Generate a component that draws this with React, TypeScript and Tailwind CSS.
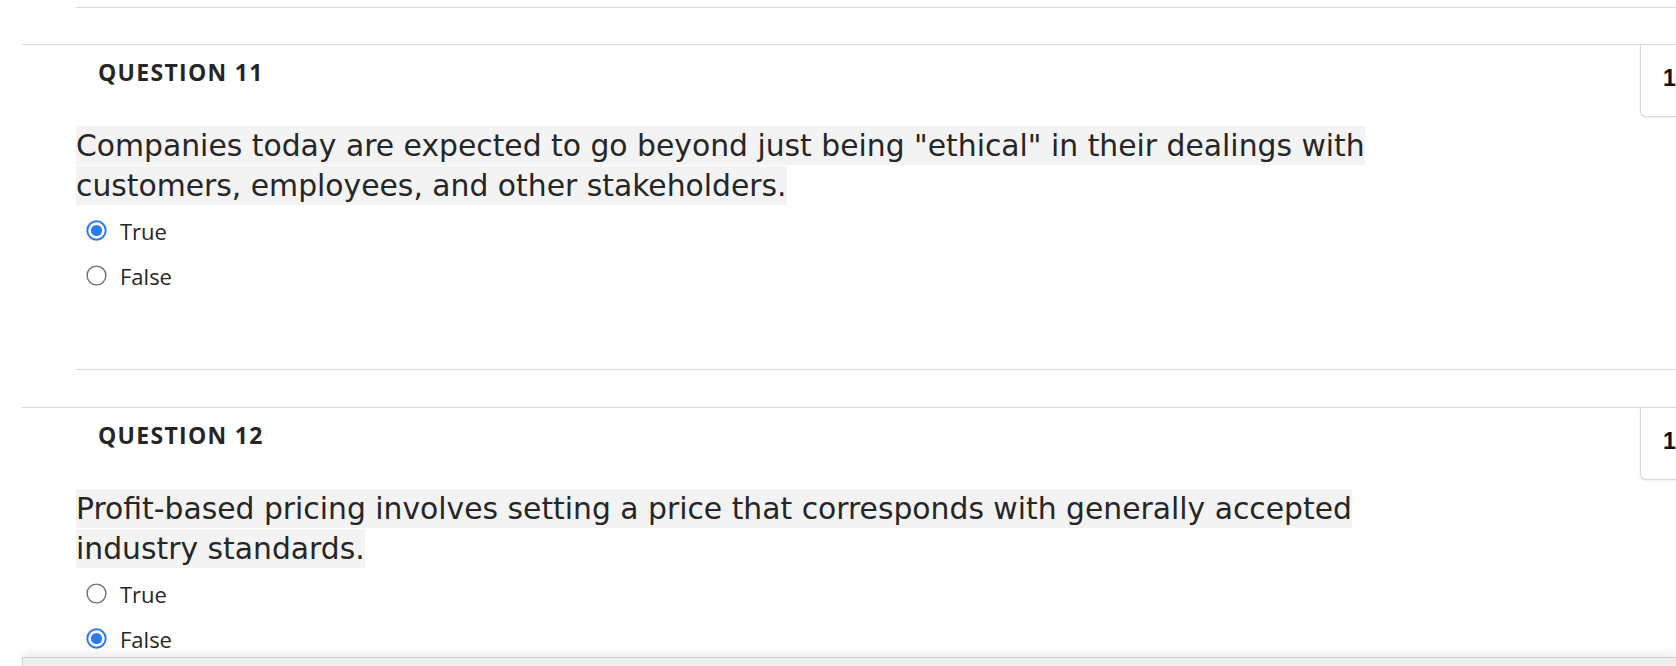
import React from "react";

function Radio({ checked }: { checked: boolean }) {
  return (
    <svg width="21" height="21" viewBox="0 0 21 21" className="shrink-0">
      {checked ? (
        <>
          <circle cx="10.5" cy="10.5" r="9.2" fill="#ffffff" stroke="#2a7bf0" strokeWidth="2" />
          <circle cx="10.5" cy="10.5" r="5.6" fill="#2a7bf0" />
        </>
      ) : (
        <circle cx="10.5" cy="10.5" r="9.4" fill="#ffffff" stroke="#6f6f6f" strokeWidth="1.4" />
      )}
    </svg>
  );
}

function Option({ label, checked }: { label: string; checked: boolean }) {
  return (
    <div className="flex h-[45px] items-center pl-[10px]">
      <Radio checked={checked} />
      <span className="ml-[13px] font-['Open_Sans',sans-serif] text-[22px] leading-[28px] text-[#262626]">
        {label}
      </span>
    </div>
  );
}

function Question({
  num,
  line1,
  line2,
  answer,
}: {
  num: number;
  line1: string;
  line2: string;
  answer: "True" | "False";
}) {
  return (
    <section className="ml-[22px] mb-[37px] border-t border-[#d9d9d9]">
      <div className="flex h-[72px] items-start">
        <h3 className="pl-[76px] pt-[12px] font-['Open_Sans',sans-serif] text-[23px] font-bold leading-[30px] tracking-[1.3px] text-[#262626]">
          QUESTION {num}
        </h3>
        <div className="ml-auto -mr-[74px] h-[72px] w-[110px] shrink-0 whitespace-nowrap rounded-bl-[6px] border-b border-l border-[#d8d8d8] bg-white pl-[22px] pt-[21px] font-['Liberation_Sans',Arial,sans-serif] text-[23px] font-bold leading-[24px] text-[#111111] shadow-[0_1px_3px_rgba(0,0,0,0.08)]">
          {"1 points"}
        </div>
      </div>
      <div className="pl-[54px]">
        <p className="mt-[9px] w-[1400px] font-['DejaVu_Sans',sans-serif] text-[29.8px] leading-[40px] text-[#262626]">
          <span className="bg-[#f3f3f3] py-[2.2px] [box-decoration-break:clone]">
            {line1}
            <br />
            {line2}
          </span>
        </p>
        <div className="mt-[2px]">
          <Option label="True" checked={answer === "True"} />
          <Option label="False" checked={answer === "False"} />
        </div>
        <div className="h-[72px] border-b border-[#d9d9d9]" />
      </div>
    </section>
  );
}

export default function App() {
  return (
    <div className="relative h-[666px] w-[1676px] overflow-hidden bg-white">
      <div className="ml-[76px] h-[8px] border-b border-[#d9d9d9]" />
      <div className="mt-[36px]">
        <Question
          num={11}
          line1={'Companies today are expected to go beyond just being "ethical" in their dealings with'}
          line2="customers, employees, and other stakeholders."
          answer="True"
        />
        <Question
          num={12}
          line1="Profit-based pricing involves setting a price that corresponds with generally accepted"
          line2="industry standards."
          answer="False"
        />
      </div>
      <div className="absolute bottom-0 left-[22px] right-0 h-[9px] border-l border-t border-[#d0d0d0] bg-[#eeeeee] shadow-[0_-4px_8px_rgba(0,0,0,0.08)]" />
    </div>
  );
}
